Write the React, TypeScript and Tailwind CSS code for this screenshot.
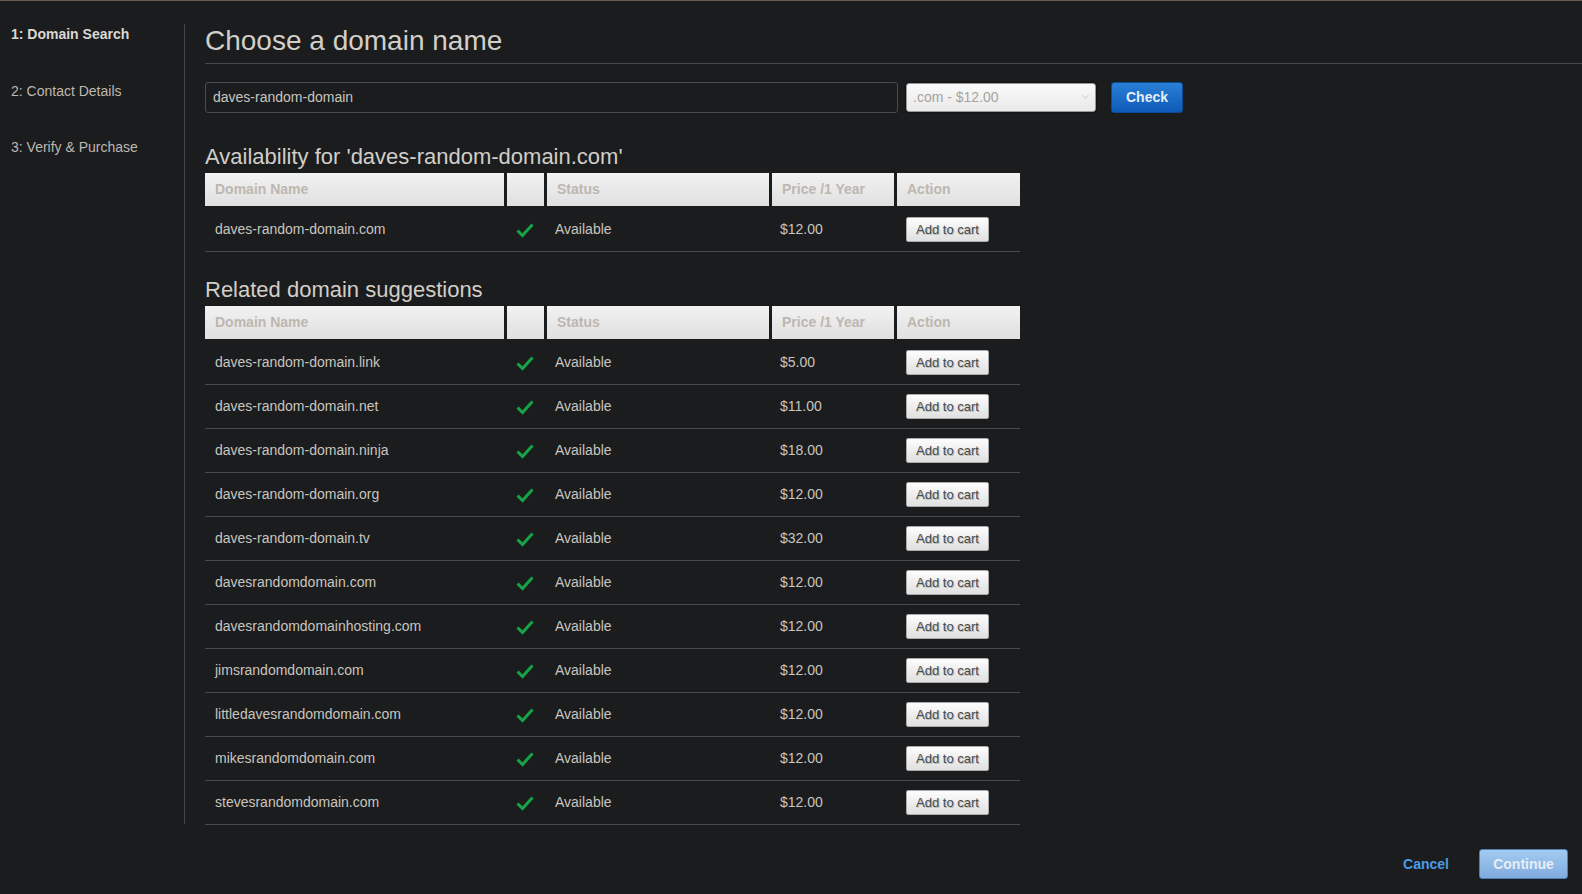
const suggestions = [
  { name: "daves-random-domain.link", price: "$5.00" },
  { name: "daves-random-domain.net", price: "$11.00" },
  { name: "daves-random-domain.ninja", price: "$18.00" },
  { name: "daves-random-domain.org", price: "$12.00" },
  { name: "daves-random-domain.tv", price: "$32.00" },
  { name: "davesrandomdomain.com", price: "$12.00" },
  { name: "davesrandomdomainhosting.com", price: "$12.00" },
  { name: "jimsrandomdomain.com", price: "$12.00" },
  { name: "littledavesrandomdomain.com", price: "$12.00" },
  { name: "mikesrandomdomain.com", price: "$12.00" },
  { name: "stevesrandomdomain.com", price: "$12.00" },
];

const Check = () => (
  <svg width="18" height="16" viewBox="0 0 18 16">
    <path d="M1.5 8.5 L6.5 13.5 L16.5 2.5" fill="none" stroke="#17a348" strokeWidth="3" />
  </svg>
);

const HeaderRow = () => (
  <div className="flex h-[37px] gap-[3px] border-y-2 border-[#1b1c1e] text-[14px] font-bold text-[#bdb7b0]">
    {["Domain Name", "", "Status", "Price /1 Year", "Action"].map((label, i) => (
      <div
        key={i}
        className={
          "flex items-center bg-gradient-to-b from-[#f2f2f2] to-[#e0e0e0] pl-[10px] " +
          ["w-[299px]", "w-[37px]", "w-[222px]", "w-[122px]", "flex-1"][i]
        }
      >
        {label}
      </div>
    ))}
  </div>
);

const Row = ({ name, price }: { name: string; price: string }) => (
  <div className="flex h-[44px] items-center border-b border-[#4a4a4a] text-[14px] text-[#c9c5be]">
    <div className="w-[302px] pl-[10px]">{name}</div>
    <div className="flex w-[40px] justify-center pr-[5px]">
      <Check />
    </div>
    <div className="w-[225px] pl-[8px]">Available</div>
    <div className="w-[125px] pl-[8px]">{price}</div>
    <div className="flex-1 pl-[9px]">
      <button className="h-[25px] w-[83px] rounded-[2px] border border-[#aaa] bg-gradient-to-b from-[#fdfdfd] to-[#e0e0e0] text-[13px] text-[#4a4a4a] [text-shadow:1px_1px_0_#bbb]">
        Add to cart
      </button>
    </div>
  </div>
);

export default function App() {
  return (
    <div
      className="min-h-[894px] w-full border-t border-[#6b5d50] bg-[#1b1c1e]"
      style={{ fontFamily: '"Liberation Sans", Arial, sans-serif' }}
    >
      <div className="flex pt-[23px]">
        {/* Steps */}
        <div className="w-[185px] shrink-0">
          <div className="h-[800px] border-r border-[#45464a] pl-[11px] text-[14px] text-[#bdb8b1]">
            <div className="font-bold text-[#dcd8d2]">1: Domain Search</div>
            <div className="pt-[36px]">2: Contact Details</div>
            <div className="pt-[35px]">3: Verify &amp; Purchase</div>
          </div>
        </div>

        {/* Main */}
        <div className="flex-1 pl-[20px]">
          <h1 className="border-b border-[#46474b] pb-[5px] text-[28px] leading-[34px] text-[#d2cec8]">
            Choose a domain name
          </h1>

          <div className="mt-[18px] flex items-center">
            <div className="flex h-[31px] w-[693px] items-center rounded-[3px] border border-[#4a4b4f] bg-[#1b1c1e] pl-[7px] text-[14px] text-[#c9c5be]">
              daves-random-domain
            </div>
            <div className="relative ml-[8px] flex h-[29px] w-[190px] items-center rounded-[3px] border border-[#999] bg-gradient-to-b from-[#fafafa] to-[#e9e9e9] pl-[6px] text-[14px] text-[#a8a39c] shadow-[0_0_2px_#000]">
              .com - $12.00
              <span className="absolute right-[7px] top-[9px] h-[5px] w-[5px] rotate-45 border-b border-r border-[#d4d4d4]" />
            </div>
            <button className="ml-[15px] h-[31px] w-[72px] rounded-[3px] border border-[#0b4a96] bg-gradient-to-b from-[#2a7fd6] to-[#0d5bb8] text-[14px] font-bold text-[#e6eef7]">
              Check
            </button>
          </div>

          <div className="w-[815px]">
            <h2 className="mt-[31px] text-[22px] leading-[26px] text-[#d2cec8]">
              Availability for 'daves-random-domain.com'
            </h2>
            <div className="mt-[1px]">
              <HeaderRow />
              <Row name="daves-random-domain.com" price="$12.00" />
            </div>

            <h2 className="mt-[25px] text-[22px] leading-[26px] text-[#d2cec8]">
              Related domain suggestions
            </h2>
            <div className="mt-[1px]">
              <HeaderRow />
              {suggestions.map((s) => (
                <Row key={s.name} name={s.name} price={s.price} />
              ))}
            </div>
          </div>
        </div>
      </div>

      {/* Footer actions */}
      <div className="flex items-center justify-end pr-[14px] pt-[24px]">
        <button className="text-[14px] font-bold text-[#4a9be6]">Cancel</button>
        <button className="ml-[30px] h-[30px] w-[89px] rounded-[3px] border border-[#4f7fb3] bg-gradient-to-b from-[#a3cbf2] to-[#7fabdd] text-[14px] font-bold text-[#e7eef6]">
          Continue
        </button>
      </div>
    </div>
  );
}
